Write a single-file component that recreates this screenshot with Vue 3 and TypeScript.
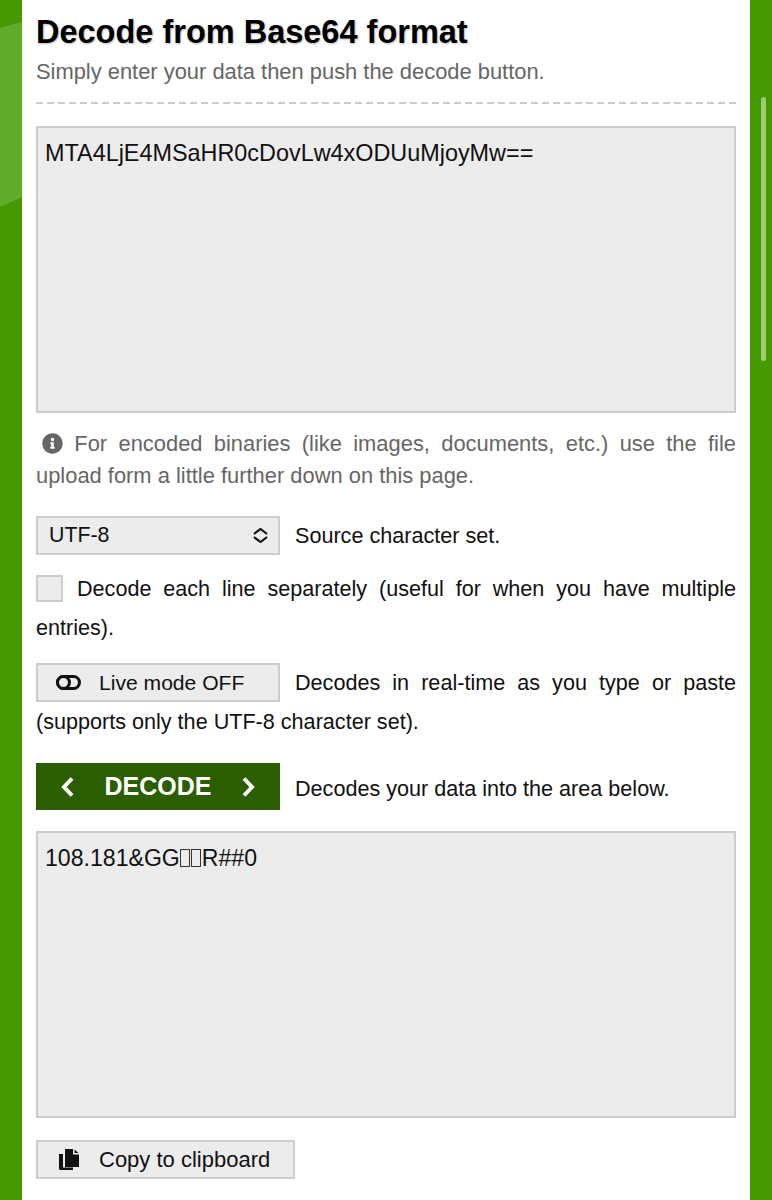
<script setup lang="ts">
const encoded = 'MTA4LjE4MSaHR0cDovLw4xODUuMjoyMw=='
</script>

<template>
  <div class="page">
    <div class="blob-a"></div>
    <div class="scrollbar"></div>
    <main class="card">
      <h1>Decode from Base64 format</h1>
      <p class="lead">Simply enter your data then push the decode button.</p>
      <div class="dashed"></div>

      <textarea class="data" readonly :value="encoded"></textarea>

      <p class="note">
        <svg class="info" viewBox="0 0 512 512" width="21" height="21">
          <path fill="#666" d="M256 8C119 8 8 119 8 256s111 248 248 248 248-111 248-248S393 8 256 8zm0 110a42 42 0 1 1 0 84 42 42 0 0 1 0-84zm56 254c0 7-5 12-12 12h-88c-7 0-12-5-12-12v-24c0-7 5-12 12-12h12v-64h-12c-7 0-12-5-12-12v-24c0-7 5-12 12-12h64c7 0 12 5 12 12v100h12c7 0 12 5 12 12v24z"/>
        </svg>
        For encoded binaries (like images, documents, etc.) use the file upload form a little further down on this page.
      </p>

      <div class="row charset">
        <div class="select">
          <span>UTF-8</span>
          <svg viewBox="0 0 15 15" width="15" height="15">
            <path d="M1 6 7.500 1 14 6M1 9l6.500 5L14 9" fill="none" stroke="#111" stroke-width="2.200"/>
          </svg>
        </div>
        <span class="hint">Source character set.</span>
      </div>

      <p class="check-line"><span class="checkbox"></span>Decode each line separately (useful for when you have multiple entries).</p>

      <p class="live-line">
        <span class="btn live">
          <svg viewBox="0 0 25 15" width="25" height="15">
            <rect x="1.500" y="1.500" width="22" height="12" rx="6" fill="none" stroke="#111" stroke-width="3"/>
            <circle cx="7.500" cy="7.500" r="6" fill="#ececec" stroke="#111" stroke-width="3"/>
          </svg>
          <span>Live mode OFF</span>
        </span>Decodes in real-time as you type or paste (supports only the UTF-8 character set).
      </p>

      <div class="row action">
        <button class="decode">
          <svg viewBox="0 0 15 22" width="15" height="22"><path d="M12 2.500 4 11l8 8.500" fill="none" stroke="#fff" stroke-width="4"/></svg>
          <span>DECODE</span>
          <svg viewBox="0 0 15 22" width="15" height="22"><path d="M3 2.500 11 11l-8 8.500" fill="none" stroke="#fff" stroke-width="4"/></svg>
        </button>
        <span class="hint">Decodes your data into the area below.</span>
      </div>

      <div class="data out">108.181&amp;GG<i class="tofu"></i><i class="tofu"></i>R##0</div>

      <span class="btn copy">
        <svg viewBox="0 0 20 21" width="20" height="21">
          <path fill="#111" d="M6 0h8v5.500h6V18H6z"/>
          <path fill="#111" d="M15.500 0.500 19.500 4h-4z"/>
          <path fill="#111" d="M0 5h4v13.500h10V21H1.500A1.500 1.500 0 0 1 0 19.500z"/>
        </svg>
        Copy to clipboard
      </span>
    </main>
  </div>
</template>

<style>
html,
body {
  margin: 0;
  background: #449a00;
}
</style>

<style scoped>
.page {
  position: relative;
  height: 1200px;
  overflow: hidden;
  padding: 0 22px;
  box-sizing: border-box;
  background: #449a00;
  font-family: "Liberation Sans", Arial, sans-serif;
}

.blob-a {
  position: absolute;
  left: 0;
  top: 20px;
  width: 22px;
  height: 190px;
  background: #62ac2b;
  clip-path: polygon(0 8px, 100% 2px, 100% 177px, 0 187px);
}

.scrollbar {
  position: absolute;
  left: 761px;
  top: 97px;
  width: 5px;
  height: 264px;
  border-radius: 3px;
  background: #9dcb78;
}

.card {
  position: relative;
  height: 1200px;
  padding: 0 14px;
  background: #fff;
  font-size: 21.600px;
  color: #111;
}

h1 {
  margin: 0;
  padding-top: 12px;
  font-size: 32.500px;
  line-height: 40px;
  font-weight: 700;
  color: #000;
  text-shadow: 1px 1px 2px #bbb;
}

.lead {
  margin: 0;
  padding-top: 4px;
  font-size: 21.900px;
  line-height: 32px;
  color: #666;
}

.dashed {
  height: 2px;
  margin-top: 14px;
  background: repeating-linear-gradient(90deg, #ccc 0 7px, transparent 7px 11px);
}

.data {
  display: block;
  box-sizing: border-box;
  width: 700px;
  height: 287px;
  margin: 22px 0 0;
  padding: 10px 7px;
  border: 2px solid #ccc;
  border-radius: 0;
  background: #ececec;
  resize: none;
  outline: none;
  font: 23.400px/30px "Liberation Sans", Arial, sans-serif;
  color: #111;
}

.data.out {
  margin-top: 21px;
  font-size: 23.100px;
}

.tofu {
  display: inline-block;
  box-sizing: border-box;
  width: 10px;
  height: 18px;
  margin: 0 0.500px;
  border: 1px solid #333;
  vertical-align: -1px;
}

.note {
  margin: 15px 0 0;
  font-size: 21.900px;
  line-height: 32px;
  color: #666;
  text-align: justify;
}

.info {
  vertical-align: -3px;
  margin: 0 0 0 6px;
}

.row {
  display: flex;
  align-items: center;
}

.charset {
  margin-top: 24px;
  gap: 15px;
}

.select {
  box-sizing: border-box;
  display: flex;
  align-items: center;
  justify-content: space-between;
  width: 244px;
  height: 39px;
  padding: 0 10px 0 11px;
  border: 2px solid #ccc;
  background: #ececec;
  font-size: 21.300px;
}

.check-line {
  margin: 14px 0 0;
  line-height: 39px;
  text-align: justify;
}

.checkbox {
  display: inline-block;
  box-sizing: border-box;
  width: 27px;
  height: 27px;
  margin-right: 14px;
  border: 2px solid #ccc;
  background: #ececec;
  vertical-align: -6px;
}

.live-line {
  margin: 16px 0 0;
  line-height: 39px;
  text-align: justify;
}

.btn {
  box-sizing: border-box;
  display: inline-flex;
  align-items: center;
  height: 39px;
  border: 2px solid #ccc;
  background: #ececec;
  vertical-align: top;
}

.live {
  width: 244px;
  padding-left: 18px;
  gap: 18px;
  margin-right: 15px;
  font-size: 21.100px;
}

.action {
  margin-top: 22px;
  gap: 15px;
}

.action .hint {
  padding-top: 4px;
}

.decode {
  display: flex;
  align-items: center;
  justify-content: space-between;
  width: 244px;
  height: 47px;
  padding: 0 24px;
  border: 0;
  background: #2a5e00;
  color: #fff;
  font: 700 25px "Liberation Sans", Arial, sans-serif;
}

.copy {
  width: 259px;
  margin-top: 22px;
  padding-left: 21px;
  gap: 20px;
  font-size: 22px;
}
</style>
